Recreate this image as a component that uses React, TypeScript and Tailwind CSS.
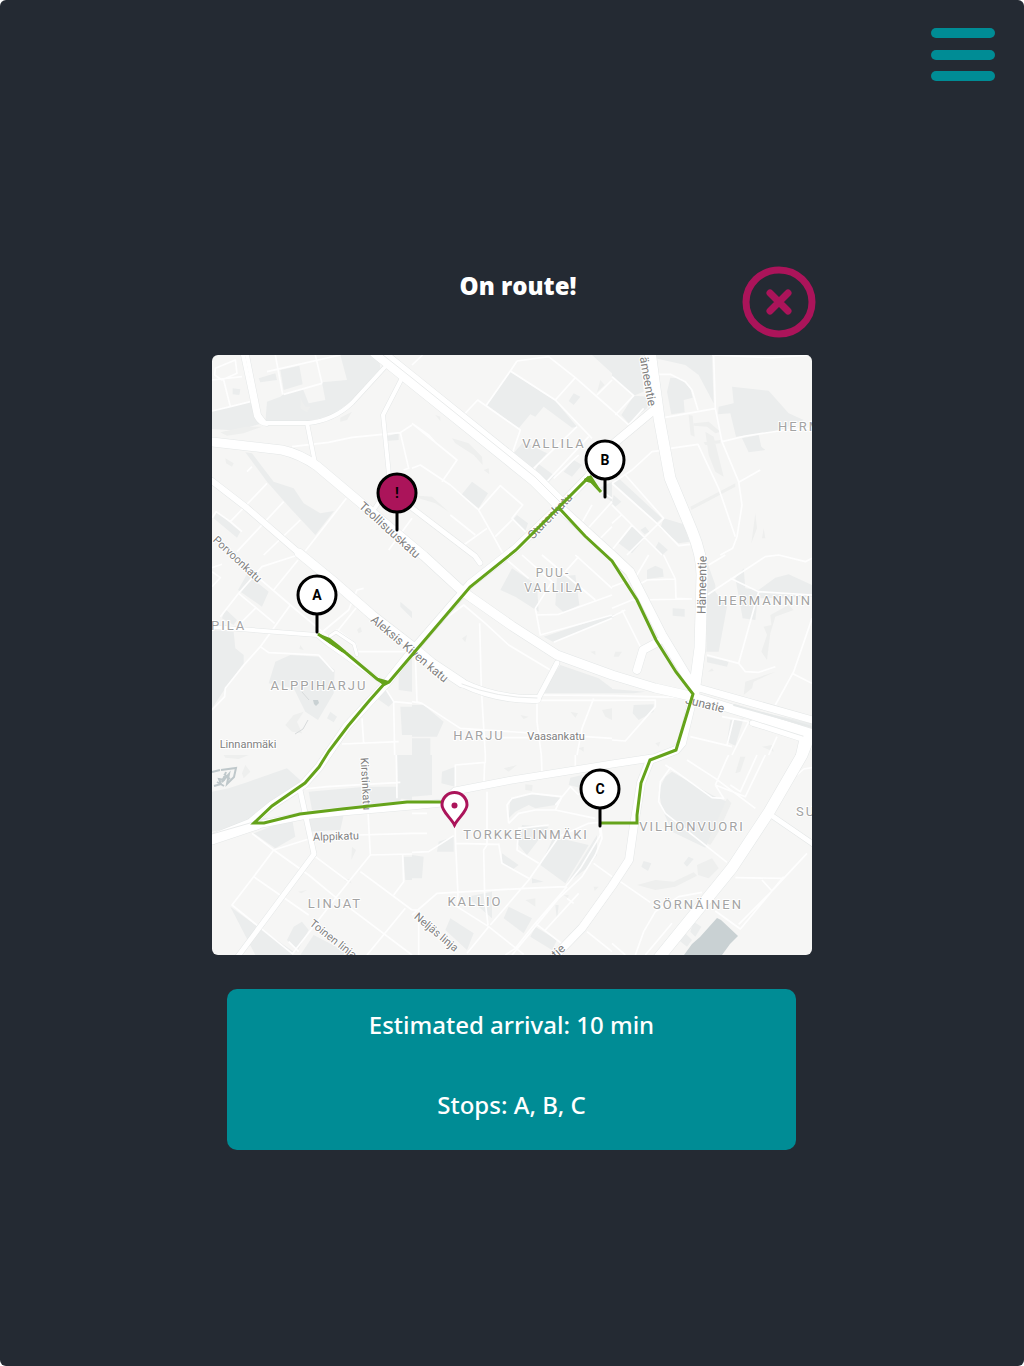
type District = { x: number; y: number; parks: string; shade?: string; lanes: string };

// Each district covers a 200 x 200 block of the map, drawn at three units to one.
const districts: District[] = [
  {
    x: 0,
    y: 0,
    parks:
      "M0 168L118 140L132 186L150 205L105 218L60 226L0 222Z M140 70L190 55L195 75L145 82Z M205 45L262 32L272 88L215 105Z M215 118L272 100L290 145L340 135L330 82L405 75L385 0L500 0L505 40L415 140L360 180L285 200L160 200L165 140L205 125Z M100 292L120 295L185 380L245 400L275 445L325 475L366 468L310 540L235 460L165 380Z M15 470L85 530L75 548L5 490Z M62 100L85 103L82 120L62 118Z M525 243L560 235L560 255L525 258Z",
    shade: "M25 232L100 215L150 215L95 235L45 242Z M40 310L65 325L60 335L42 325Z M385 188L420 170L405 195L385 200Z M265 130L280 155L295 155L285 172L265 160Z",
    lanes:
      "M0 75L90 65 M10 40L70 15L75 55L30 75L8 60Z M35 75L55 155L0 168 M55 155L115 140 M165 50L385 0 M190 0L212 118 M215 118L330 85 M310 0L330 85 M240 275L350 262L420 247L565 233L600 210 M565 233L590 340L575 345 M105 350L120 335 M165 385L55 500L12 470L0 488 M55 500L90 530 M215 440L75 590 M265 495L155 600 M403 430L280 588 M600 490L530 585",
  },
  {
    x: 200,
    y: 0,
    parks:
      "M295 50L430 138L495 215L480 218L395 155L370 185L355 178L320 220L225 150Z M335 260L405 295L360 345L300 300Z M370 345L380 327L428 362L405 388L370 365Z M180 380L228 415L200 460L148 420Z M315 480L348 505L340 528L302 495Z M485 115L505 125L485 150L470 138Z M540 0L600 0L600 55Z M485 315L510 330L480 365L455 350Z M560 400L600 380L600 440L575 425Z",
    shade: "M120 250L170 265L210 305L212 330L185 300L130 265Z M215 345L230 340L232 358Z M20 422L60 425L110 470L70 445L20 430Z M565 75L578 90L555 112Z M70 180L85 185L85 198Z",
    lanes:
      "M0 30L32 0 M315 18L410 5L490 68L600 165 M315 18L295 48L222 152 M490 68L430 135L295 48 M430 135L540 250 M600 75L555 120 M155 180L197 135L325 225L300 298 M495 215L355 350 M530 245L400 385 M500 300L425 370 M0 205L50 240L70 262 M0 205L135 315L90 380 M0 340L25 330L115 390L200 465L265 392L332 450L300 490L355 545 M200 465L245 545L275 600 M250 545L300 495 M115 480L190 540 M155 570L225 520 M500 520L540 450 M510 540L600 440 M545 570L600 515 M535 385L600 430",
  },
  {
    x: 400,
    y: 0,
    parks:
      "M0 0L85 0L95 110L65 122L0 65Z M65 122L115 125L105 160L50 205L28 180Z M130 0L300 0L305 145L260 60L220 30L130 10Z M175 68L205 70L235 100L242 128L215 135L218 172L178 178L165 110Z M360 95L470 107L530 175L575 195L490 230L372 245L355 175L318 178L320 155L365 145Z M390 250L440 240L448 275L460 285L410 292Z M15 365L150 490L135 502L5 385Z M155 490L215 508L232 560L200 565L145 520Z M60 515L98 550L60 595L20 565Z M5 420L28 440L10 455L0 445Z M140 560L168 585L150 600L130 578Z M100 515L112 530L98 538L85 525Z",
    shade: "M230 180L242 182L248 245L236 240Z M245 205L290 200L325 230L310 235L285 215L245 212Z M280 230L305 245L335 365L310 350L290 300Z M275 262L325 255L325 265L280 270Z M235 455L370 385L370 395L238 465Z M430 475L435 520L418 565Z M455 520L460 550L450 550Z",
    lanes:
      "M130 58L175 58L220 80L240 105L258 165 M160 187L312 160 M305 0L310 160L330 260L380 380L390 450L375 545L362 580L325 600 M300 0L480 8L600 0 M330 260L400 243L520 225L600 220 M175 280L258 268L320 400L370 545 M0 385L60 345L120 290L160 285 M380 382L445 345 M0 65L65 122L10 180 M0 165L50 210L95 160 M40 360L155 490L90 555L45 600 M0 385L140 510L200 572L235 568 M0 450L60 510L0 585 M60 510L150 600 M0 505L28 480",
  },
  {
    x: 0,
    y: 200,
    parks:
      "M105 58L170 110L150 155L78 105Z M0 225L65 230L70 280L95 300L95 325L40 400L0 460Z M190 320L235 300L320 305L368 345L365 415L318 495L280 470L245 400L170 385Z M30 190L40 162L75 195L65 210Z M565 140L600 170L600 190L565 155Z M560 320L600 290L600 410L560 405Z M565 455L600 455L600 540L570 540Z M480 420L520 400L545 440L530 455Z M355 470L375 485L365 502L345 490Z",
    shade: "M220 510L245 480L275 470L255 500L270 535L240 530Z M265 270L275 285L262 282Z M435 225L445 215L450 230L440 235Z",
    lanes:
      "M0 50L25 68L0 95 M0 38L30 28 M25 185L80 115L150 35L258 0 M60 0L235 150 M80 115L188 205 M130 160L65 225 M258 15L185 105 M235 150L145 275L100 325L40 400L38 425L0 465 M145 275L170 293L320 300L365 350 M320 240L410 165L435 105L455 100 M360 235L375 225L430 265L440 305 M435 155L375 230 M235 150L355 250 M435 290L600 290 M520 400L545 440L600 445 M545 440L548 600 M450 490L455 565 M390 567L560 560",
  },
  {
    x: 200,
    y: 200,
    parks:
      "M300 40L375 90L380 170L310 125L265 105Z M435 65L490 60L502 150L455 172L430 150Z M445 330L560 370L600 400L600 415L385 415Z M395 245L600 178L600 190L425 262Z M0 450L35 450L95 500L75 545L0 545Z M0 550L55 550L55 600L0 600Z",
    shade: "M150 250L165 240L160 262Z M325 480L350 485L335 492Z M475 470L498 475L490 488Z M570 465L600 460L600 495L580 485Z M500 580L515 575L515 590Z M535 290L550 288L550 300Z",
    lanes:
      "M285 15L350 70 M330 0L420 80L370 160L385 240L600 180 M390 0L550 135 M375 180L440 178L600 120 M490 0L545 50L600 100 M460 50L500 5 M425 262L600 190 M60 220L155 150L220 205L290 270L415 345 M203 205L208 400L220 600 M380 420L600 422 M380 436L600 436 M10 300L15 440L30 445L145 520L600 550 M0 440L30 445 M375 440L375 500L388 600 M545 430L510 520L495 600 M240 548L370 548",
  },
  {
    x: 400,
    y: 200,
    parks:
      "M105 45L130 32L152 42L155 65L105 72Z M285 20L310 90L310 110L345 155L320 290L283 290Z M370 70L395 40L400 100L440 105L430 195L392 190Z M440 105L490 68L530 58L600 90L600 125L440 130Z M182 160L218 162L218 185L182 182Z M285 305L350 320L345 335L285 322Z M65 450L125 448L125 470L80 495L62 475Z M0 402L100 410L65 415L0 415Z M0 180L25 175L0 190Z M355 495L395 490L370 572L345 560Z M375 455L600 505L600 525L380 475Z M420 505L560 535L555 545L420 515Z",
    shade: "M475 180L530 150L545 165L490 185L475 235L465 315L448 290L465 240L455 215L478 210Z M395 420L400 380L490 350L425 380L420 400Z M10 290L30 290L20 305L5 305Z M288 350L300 340L305 348Z M450 575L480 570L485 590Z M130 565L145 560L140 575Z",
    lanes:
      "M0 95L70 68L110 0 M70 95L105 75L190 72L192 130L240 132 M155 0L190 72 M285 120L460 5L500 0L580 20L600 10 M355 70L440 110L600 120 M600 190L545 350L490 450 M540 355L600 385 M285 300L380 325L440 110 M380 325L400 350L440 352L490 335 M0 160L60 135L240 132 M30 165L85 275 M0 185L40 165 M0 422L220 428 M0 436L130 435L130 455L40 558L0 555 M235 545L360 575 M365 490L345 570 M330 485L410 500 M360 600L410 500 M495 545L470 600 M290 30L340 0",
  },
  {
    x: 0,
    y: 400,
    parks:
      "M0 110L50 100L110 80L225 40L270 80L185 150L120 205L0 230Z M290 110L460 95L600 95L560 140L300 165Z M125 235L240 190L250 245L190 280Z M275 180L395 180L385 225L290 230Z M55 455L130 510L245 590L240 600L130 600Z M245 515L270 500L290 525L255 590L225 555Z M305 540L420 600L265 600Z M555 0L600 0L600 135L558 130Z M575 305L600 305L600 375L580 375Z",
    shade: "M35 0L110 0L80 12L40 8Z M100 30L115 50L95 70L90 55Z M420 275L432 285L418 315Z M258 410L285 405L268 415Z M395 375L415 372L418 385Z",
    lanes:
      "M275 102L345 95L565 82 M553 0L555 130 M468 170L475 300L600 297 M475 300L370 430L240 598 M445 350L600 465 M310 305L410 380 M120 235L185 285L290 360L375 430L600 600 M185 285L290 252 M185 285L125 365L60 450L240 595 M125 365L290 480 M440 240L600 235 M572 300L575 380L545 420 M580 460L510 545L465 600 M230 560L260 590",
  },
  {
    x: 200,
    y: 400,
    parks:
      "M0 0L60 0L60 120L0 125Z M90 50L130 35L130 95L88 85Z M475 68L510 60L510 100L470 90Z M295 130L360 118L445 128L430 150L370 160L350 150L310 170L290 190Z M330 210L410 215L345 300L315 265Z M425 245L530 270L460 385L385 330Z M555 240L555 300L530 335L465 385Z M270 295L320 330L300 345L270 325Z M290 455L360 490L335 535L275 490Z M115 490L185 535L165 585L100 525Z M370 515L435 555L420 585L355 545Z M0 300L35 305L30 370L0 370Z M165 425L240 410L240 490Z M360 370L395 380L360 385Z M80 260L125 245L125 290L75 290Z M430 450L440 450L435 495Z",
    shade: "M275 40L315 30L290 50Z M340 88L362 90L360 108L340 105Z M545 395L560 395L548 408Z M455 420L470 420L468 430Z M340 435L370 430L370 455Z",
    lanes:
      "M130 95L130 30L220 22L220 0 M225 110L225 270L215 285L218 425L228 510 M215 105L218 22 M388 0L390 55 M490 0L490 35 M130 105L130 245L138 420L135 455L230 515 M130 265L260 268 M0 292L50 290L125 242 M0 235L45 235 M0 175L45 175 M0 480L75 415L340 400L460 395L505 340L565 240L560 190 M235 510L350 375L440 245L530 205L560 202 M380 325L315 285L320 220L410 210 M290 205L285 150L300 130L360 115L450 125L430 165L550 190 M290 205L320 175L370 165L430 165 M430 150L475 95L500 120 M260 265L270 325L350 370 M465 395L370 505L310 580L280 600 M230 515L335 598 M230 515L165 595 M370 505L455 570 M400 525L500 415 M465 430L485 445 M545 325L600 365 M300 600L440 430L510 365L550 300L570 250L565 200 M525 530L600 590 M0 465L20 465L20 600",
  },
  {
    x: 400,
    y: 400,
    parks:
      "M160 65L180 50L300 120L345 140L310 215L280 278L180 230L150 160L140 105Z M95 318L118 325L108 348L88 335Z M215 325L230 305L245 312L225 335Z M245 500L268 515L250 545L235 530Z M215 530L240 555L225 575L200 555Z",
    shade: "M345 130L358 145L320 230L295 270L285 265Z M75 390L130 375L185 380L245 352L255 362L190 395L130 405Z M385 5L400 5L385 50L370 55Z M255 330L300 310L320 340L290 370L258 360Z",
    lanes:
      "M225 15L310 70L430 160 M310 90L335 130L300 128L175 38L145 80L140 140L160 175L345 322 M310 90L345 10L350 0 M310 90L400 125L460 0 M355 90L385 110L435 0 M160 30L190 50 M555 60L575 42L600 38 M370 368L515 370L480 408L380 508 M480 408L450 375 M515 370L585 295 M310 468L385 522L420 480L515 365 M25 380L115 442 M70 600L95 530L130 470L200 425L270 412 M0 565L40 600 M100 600L180 505",
  },
];

const roads = [
  { width: 4, d: "M35 0L47 60L53 68H97Q122 65 140 48L172 13" },
  { width: 4, d: "M31 0L44 61Q48 69 55 69" },
  { width: 4, d: "M190 23L171 60L178 130L163 153" },
  { width: 4, d: "M95 68L103 108" },
  { width: 5, d: "M200 153L263 201L268 208" },
  { width: 4, d: "M0 272L105 280L116 289L170 327" },
  { width: 3, d: "M118 281L124 277L142 289L145 300" },
  { width: 5, d: "M88 435L102 499L24 604" },
  { width: 5, d: "M327 342L345 308" },
  { width: 5, d: "M540 368L590 384L586 402" },
  { width: 5, d: "M556 458L604 491" },
  { width: 8, d: "M425 315L431 295L446 287" },
  { width: 6, d: "M0 126L35 153L87 198" },
  {
    width: 9,
    d: "M0 87L70 95Q88 99 105 111L150 149L212 201L250 236L300 271L345 300L400 320L443 333L478 341L537 359L604 380",
  },
  { width: 9, d: "M87 198L120 225L160 260L200 291L220 308L250 328" },
  { width: 8, d: "M250 328Q285 345 325 344" },
  { width: 11, d: "M438 -4L447 63L458 123L480 176Q490 200 490 220L488 293L482 338" },
  { width: 8, d: "M482 338L470 388L464 395L438 405L429 428L422 470L417 505L400 531L370 573L340 604" },
  { width: 8, d: "M442 55L400 90L376 122L347 152L304 193L258 229L200 296L173 330L135 371L107 412L91 430L60 450L38 468L0 483" },
  { width: 9, d: "M0 485L45 470" },
  { width: 7, d: "M45 470L90 461L130 457L200 451L230 448L243 436L300 425L400 409L440 403" },
  { width: 7, d: "M487 333L604 366" },
  { width: 11, d: "M597 382L590 400L557 457L520 513L446 604" },
  { width: 9, d: "M345 150L400 200L418 217L450 280L483 335" },
  { width: 14, d: "M164 -4L200 25L323 124L348 149" },
];

const areas = [
  { text: "VALLILA", x: 342, y: 93 },
  { text: "PUU-", x: 341, y: 222, size: 12 },
  { text: "VALLILA", x: 342, y: 237, size: 12 },
  { text: "ALPPIHARJU", x: 107, y: 335 },
  { text: "HARJU", x: 267, y: 385 },
  { text: "TORKKELINMÄKI", x: 314, y: 484 },
  { text: "VILHONVUORI", x: 480, y: 476 },
  { text: "SÖRNÄINEN", x: 486, y: 554 },
  { text: "KALLIO", x: 263, y: 551 },
  { text: "LINJAT", x: 123, y: 553 },
];

const edgeAreas = [
  { text: "PILA", x: -1, y: 275 },
  { text: "HERMANNIN", x: 506, y: 250 },
  { text: "HERM", x: 566, y: 76 },
  { text: "SU", x: 584, y: 461 },
];

const streets = [
  { text: "Teollisuuskatu", x: 175, y: 178, turn: 42, size: 12 },
  { text: "Porvoonkatu", x: 23, y: 207, turn: 43, size: 11 },
  { text: "Aleksis Kiven katu", x: 195, y: 297, turn: 40, size: 12 },
  { text: "Sturenkatu", x: 341, y: 164, turn: -46, size: 12 },
  { text: "ämeentie", x: 432, y: 27, turn: 80, size: 12 },
  { text: "Hämeentie", x: 494, y: 230, turn: -89, size: 12 },
  { text: "Junatie", x: 492, y: 353, turn: 14, size: 12 },
  { text: "Kirstinkatu", x: 150, y: 429, turn: 87, size: 11 },
  { text: "Linnanmäki", x: 36, y: 393, turn: 0, size: 11 },
  { text: "Vaasankatu", x: 344, y: 385, turn: 0, size: 11 },
  { text: "Alppikatu", x: 124, y: 485, turn: -2, size: 11 },
  { text: "Toinen linja", x: 119, y: 587, turn: 38, size: 11 },
  { text: "Neljäs linja", x: 222, y: 580, turn: 40, size: 11 },
  { text: "tie", x: 349, y: 599, turn: -42, size: 12 },
];

const stops = [
  { label: "!", x: 185, y: 138, alert: true },
  { label: "A", x: 105, y: 240, alert: false },
  { label: "B", x: 393, y: 105, alert: false },
  { label: "C", x: 388, y: 434, alert: false },
];

function RouteMap() {
  return (
    <svg viewBox="0 0 600 600" role="img" aria-label="Route map" className="block w-full rounded-md bg-[#f6f6f5]">
      {districts.map((d) => (
        <g key={`${d.x}-${d.y}`} transform={`translate(${d.x} ${d.y}) scale(${1 / 3})`}>
          <path d={d.parks} fill="#ebeded" />
          {d.shade && <path d={d.shade} fill="#eeefee" />}
        </g>
      ))}
      {districts.map((d) => (
        <g key={`${d.x}-${d.y}`} transform={`translate(${d.x} ${d.y}) scale(${1 / 3})`} fill="none" strokeLinejoin="round">
          <path d={d.lanes} stroke="#fefefe" strokeWidth="5" />
        </g>
      ))}

      <path d="M505 563L509 565L526 581L518 589L510 600H472L480 589L488 582Z" fill="#c9d1d3" />
      <path
        d="M0 417L8 415M9 415L24 413L22 422L15 429L17 419L10 427L14 417M12 419L18 424M2 431L9 429L7 424L13 425M5 427L12 431"
        fill="none"
        stroke="#bfc8cb"
        strokeWidth="2"
      />
      <path d="M101 345L106 345L107 348L104 351L102 349Z" fill="#c9d1d3" />
      <path d="M83 379L91 374L96 365M90 337L97 345" fill="none" stroke="#d8dbdc" />

      <g fill="none" strokeLinejoin="round" strokeLinecap="round">
        {roads.map((r) => (
          <path key={r.d} d={r.d} stroke="#e4e7e7" strokeWidth={r.width + 1} />
        ))}
        {roads.map((r) => (
          <path key={r.d} d={r.d} stroke="#ffffff" strokeWidth={r.width} />
        ))}
        <path d="M166 -4L200 23L323 122L348 147M250 329Q285 343 325 343M0 479L38 468L55 463" stroke="#e9ebeb" />
        <path d="M522 350L600 372" stroke="#e6e9e9" strokeWidth="2" />
      </g>

      <g fontFamily="Roboto, sans-serif" stroke="#ffffff" strokeWidth="2" strokeLinejoin="round" paintOrder="stroke">
        {areas.map((a) => (
          <text key={`${a.text}${a.y}`} x={a.x} y={a.y} textAnchor="middle" fontSize={a.size ?? 13} fill="#a3a3a3" className="tracking-[2px]">
            {a.text}
          </text>
        ))}
        {edgeAreas.map((a) => (
          <text key={a.text} x={a.x} y={a.y} fontSize="13" fill="#a3a3a3" className="tracking-[2px]">
            {a.text}
          </text>
        ))}
        {streets.map((s) => (
          <text
            key={`${s.text}${s.y}`}
            transform={`translate(${s.x} ${s.y}) rotate(${s.turn})`}
            textAnchor="middle"
            fontSize={s.size}
            fill="#808080"
          >
            {s.text}
          </text>
        ))}
      </g>

      <g fill="none" stroke="#65a31b" strokeWidth="3">
        <path d="M106 279L134 298L165 324L173 329L177 327L200 300L258 232L304 195L376 123L389 137" />
        <path d="M347 153L373 181L400 206L425 245L444 285L464 317L481 339L464 395L438 405L429 428L425 460V468H388" />
        <path d="M173 328L157 346L136 371L117 396L107 412L93 428L60 451L42 468H52L88 459L130 454L195 447H232" />
      </g>
      <path d="M105 278L118 283L127 290L134 296L130 297L117 288Z M163 322L177 326L172 331Z M372 124L379 120L390 137L382 129L372 126Z" fill="#65a31b" />

      {stops.map((s) => (
        <g key={s.label}>
          <path d={`M${s.x} ${s.y + 20}V${s.y + 37}`} stroke="#000000" strokeWidth="3" strokeLinecap="round" />
          <circle cx={s.x} cy={s.y} r="19" fill={s.alert ? "#ab145a" : "#ffffff"} stroke="#000000" strokeWidth="3" />
          <text x={s.x} y={s.y + 5} textAnchor="middle" fontFamily="Roboto, sans-serif" fontSize="14" fontWeight="700" fill="#000000">
            {s.label}
          </text>
        </g>
      ))}

      <path
        d="M242.500 470C239 463 230 456.500 230 450A12.500 12.500 0 0 1 255 450C255 456.500 246 463 242.500 470Z"
        fill="#ffffff"
        stroke="#ab145a"
        strokeWidth="3"
      />
      <circle cx="242.500" cy="450.500" r="3" fill="#ab145a" />
    </svg>
  );
}

export default function App() {
  return (
    <div className="flex min-h-screen flex-col rounded-md bg-[#242a33] text-white">
      <nav className="flex justify-end px-[29px] pt-7">
        <button type="button" aria-label="Open menu" className="flex h-[53px] w-16 flex-col justify-between">
          <span className="h-[10px] w-full rounded-full bg-[#008c95]" />
          <span className="h-[10px] w-full rounded-full bg-[#008c95]" />
          <span className="h-[10px] w-full rounded-full bg-[#008c95]" />
        </button>
      </nav>

      <main className="mx-auto mt-[185px] flex w-full max-w-[600px] flex-col pb-16">
        <header className="-mr-1 grid grid-cols-[1fr_auto_1fr] items-start pl-2">
          <h1 className="col-start-2 pt-1 font-['Open_Sans',sans-serif] text-2xl font-extrabold">On route!</h1>
          <button type="button" aria-label="Cancel route" className="justify-self-end">
            <svg viewBox="0 0 74 72" className="block h-[72px] w-[74px]" fill="none" stroke="#ab145a" strokeLinecap="round">
              <ellipse cx="37" cy="36" rx="33" ry="32" strokeWidth="7" />
              <path d="M28 27L46 45M46 27L28 45" strokeWidth="7" />
            </svg>
          </button>
        </header>

        <section className="mt-[17px]">
          <RouteMap />
        </section>

        <section className="mt-[34px] mr-4 ml-[15px] flex flex-col items-center gap-12 rounded-[10px] bg-[#008c95] pt-5 pb-[29px] font-['Noto_Sans',sans-serif] text-2xl font-medium">
          <p>Estimated arrival: 10 min</p>
          <p>Stops: A, B, C</p>
        </section>
      </main>
    </div>
  );
}
